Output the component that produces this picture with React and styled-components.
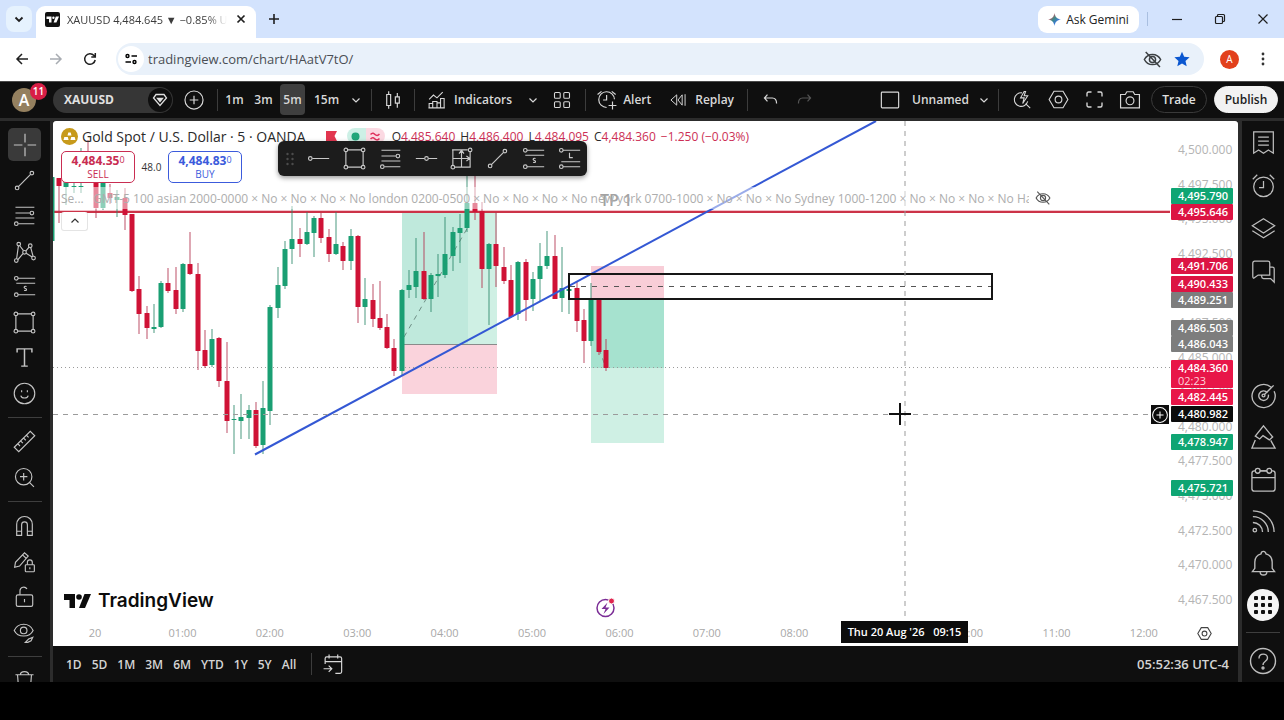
import React from "react";
import styled, { createGlobalStyle } from "styled-components";

const GlobalStyle = createGlobalStyle`
  * { box-sizing: border-box; }
  html, body { margin: 0; background: #000; }
  body, button, input { font-family: "Open Sans", "Noto Sans", sans-serif; }
  button { border: 0; padding: 0; margin: 0; background: none; color: inherit; cursor: pointer; }
`;

const Page = styled.div`
  height: 100vh;
  min-height: 560px;
  display: flex;
  flex-direction: column;
  padding-bottom: 38px;
  background: #000;
`;

/* ---------- browser chrome ---------- */
const TabStrip = styled.div`
  flex: none;
  height: 38px;
  display: flex;
  align-items: center;
  padding-left: 6px;
  background: #d3e3fd;
  color: #1f1f1f;
`;
const TabSearch = styled.button`
  width: 26px;
  height: 26px;
  border-radius: 8px;
  background: #e6f2fe;
  display: grid;
  place-items: center;
`;
const Tab = styled.div`
  align-self: flex-end;
  display: flex;
  align-items: center;
  gap: 7px;
  width: 220px;
  height: 32px;
  margin-left: 4px;
  padding: 0 8px 6px 9px;
  border-radius: 9px 9px 0 0;
  background: #fff;
`;
const TabTitle = styled.span`
  flex: 1;
  overflow: hidden;
  white-space: nowrap;
  font-size: 11px;
  color: #3c3c3c;
  mask-image: linear-gradient(90deg, #000 88%, transparent);
`;
const ChromeButton = styled.button`
  width: ${(p) => p.$w || 34}px;
  height: 30px;
  display: grid;
  place-items: center;
  color: ${(p) => p.$color || "#1f1f1f"};
`;
const Spacer = styled.div`
  flex: 1;
`;
const Gemini = styled.button`
  display: flex;
  align-items: center;
  justify-content: center;
  gap: 5px;
  width: 101px;
  height: 27px;
  border-radius: 9px;
  background: #fff;
  font-size: 12px;
  font-weight: 500;
  color: #222;
`;
const StripRule = styled.span`
  width: 1px;
  height: 14px;
  margin: 0 7px 0 8px;
  background: #a9bfe0;
`;
const AddressBar = styled.div`
  flex: none;
  height: 43px;
  display: flex;
  align-items: center;
  padding: 0 5px 1px;
  background: #fff;
`;
const Omnibox = styled.label`
  flex: 1;
  display: flex;
  align-items: center;
  height: 32px;
  margin: 0 8px 0 9px;
  padding: 0 7px 0 2px;
  border-radius: 16px;
  background: #e9f1fa;
`;
const SiteInfo = styled.span`
  width: 26px;
  height: 26px;
  border-radius: 50%;
  background: #fff;
  display: grid;
  place-items: center;
`;
const UrlInput = styled.input`
  flex: 1;
  min-width: 0;
  margin-left: 4px;
  padding: 0;
  border: 0;
  outline: 0;
  background: none;
  font-size: 13px;
  color: #4a4e54;
`;
const Profile = styled.button`
  width: 19px;
  height: 19px;
  margin: 0 8px;
  border-radius: 50%;
  background: #e2401c;
  color: #fff;
  font-size: 10px;
`;

/* ---------- app frame ---------- */
const TopBar = styled.header`
  flex: none;
  height: 40px;
  display: flex;
  align-items: center;
  padding: 0 6px 1px 0;
  background: #0f0f0f;
  border-top: 1px solid #4a4a4a;
  border-bottom: 3px solid #2c2c2c;
  color: #d8d8d8;
  font-size: 12px;
  font-weight: 600;
`;
const BarButton = styled.button`
  width: ${(p) => (p.$w ? p.$w + "px" : "auto")};
  height: 30px;
  display: flex;
  align-items: center;
  justify-content: center;
  font-size: 12px;
  font-weight: 600;
  white-space: nowrap;
  padding-right: ${(p) => p.$pad || 0}px;
  color: ${(p) => (p.$dim ? "#555" : "#d8d8d8")};
`;
const IconSlot = styled.span`
  flex: none;
  width: ${(p) => p.$w}px;
  display: grid;
  place-items: center;
`;
const BarRule = styled.span`
  flex: none;
  width: 1px;
  height: 22px;
  margin: 0 ${(p) => (p.$tight ? 2 : 5)}px;
  background: #3c3c3c;
`;
const Avatar = styled.button`
  position: relative;
  width: 24px;
  height: 24px;
  margin: 0 17px 0 12px;
  border-radius: 50%;
  background: #94805f;
  color: #fff;
  font-size: 16px;
  font-weight: 600;
  line-height: 24px;
`;
const Badge = styled.span`
  position: absolute;
  top: -5px;
  left: 18px;
  width: 17px;
  height: 17px;
  border-radius: 50%;
  background: #d81e46;
  font-size: 10px;
  line-height: 17px;
`;
const SymbolButton = styled.button`
  display: flex;
  align-items: center;
  justify-content: space-between;
  width: 120px;
  height: 26px;
  padding: 0 1px 0 11px;
  border-radius: 13px;
  background: #363636;
  font-size: 12px;
  font-weight: 700;
  color: #e0e0e0;
`;
const SymbolFlag = styled.span`
  width: 24px;
  height: 24px;
  border-radius: 50%;
  background: #0f0f0f;
  display: grid;
  place-items: center;
`;
const Interval = styled.button`
  width: ${(p) => (p.$wide ? 35 : 25)}px;
  height: 31px;
  margin: 0 2px;
  border-radius: 4px;
  font-size: 12px;
  font-weight: 600;
  background: ${(p) => (p.$active ? "#3f3f3f" : "transparent")};
`;
const Pill = styled.button`
  width: ${(p) => p.$w}px;
  height: 27px;
  margin-left: ${(p) => (p.$solid ? 7 : 3)}px;
  border-radius: 14px;
  border: 1px solid ${(p) => (p.$solid ? "#f2f2f2" : "#3a3a3a")};
  background: ${(p) => (p.$solid ? "#f2f2f2" : "transparent")};
  color: ${(p) => (p.$solid ? "#1c1c1c" : "#e0e0e0")};
  font-size: 12px;
  font-weight: 600;
`;
const Body = styled.main`
  flex: 1;
  min-height: 0;
  display: flex;
  background: #0f0f0f;
`;
const LeftRail = styled.nav`
  flex: none;
  width: 53px;
  padding: 6px 1px 0 0;
  overflow: hidden;
  border-right: 3px solid #2c2c2c;
  color: #c4c4c4;
`;
const ToolGroup = styled.div`
  display: grid;
  grid-auto-rows: 1fr;
  justify-items: center;
  align-items: center;
  height: ${(p) => p.$h}px;
`;
const Tool = styled.button`
  width: 33px;
  height: 33px;
  border-radius: 5px;
  display: grid;
  place-items: center;
  background: ${(p) => (p.$active ? "#3a3a3a" : "transparent")};
`;
const RailRule = styled.div`
  width: 34px;
  height: 1px;
  margin: 6px auto;
  background: #3e3e3e;
`;
const RightRail = styled.nav`
  flex: none;
  display: flex;
  flex-direction: column;
  width: 46px;
  border-left: 4px solid #2c2c2c;
  color: #bdbdbd;
`;
const RailButton = styled.button`
  width: 42px;
  height: ${(p) => p.$h || 42}px;
  display: grid;
  place-items: center;
`;
const AppsDot = styled.span`
  width: 32px;
  height: 32px;
  border-radius: 50%;
  background: #f5f5f5;
  color: #111;
  display: grid;
  place-items: center;
`;
const Center = styled.section`
  flex: 1;
  min-width: 0;
  display: flex;
  flex-direction: column;
`;
const Chart = styled.div`
  flex: 1;
  min-height: 0;
  display: grid;
  grid-template-columns: 1fr 68px;
  grid-template-rows: 1fr 26px;
  position: relative;
  overflow: hidden;
  background: #fff;
  border-radius: 3px 3px 0 0;
`;
const Plot = styled.div`
  position: relative;
  overflow: hidden;
`;
const PlotSvg = styled.svg`
  position: absolute;
  inset: 0;
  width: 100%;
  height: 100%;
`;
const PriceScale = styled.div`
  position: relative;
  overflow: hidden;
`;
const PriceText = styled.span`
  position: absolute;
  left: 8px;
  top: ${(p) => p.$y - 8}px;
  font-size: 12px;
  line-height: 16px;
  color: #b4b4b4;
`;
const PriceTag = styled.span`
  position: absolute;
  left: 1px;
  top: ${(p) => p.$y - 8}px;
  width: 62px;
  padding-left: 7px;
  border-radius: 1px;
  background: ${(p) => p.$bg};
  color: #fff;
  font-size: 11px;
  font-weight: 600;
  line-height: 16px;
`;
const Countdown = styled.small`
  display: block;
  margin-top: -2px;
  font-size: 11px;
  font-weight: 400;
  line-height: 14px;
  color: #ffd5dd;
`;
const TimeScale = styled.div`
  display: flex;
  justify-content: space-between;
  align-items: center;
  padding: 0 6px 2px 22px;
  font-size: 11px;
  color: #a8a8a8;
`;
const TimeText = styled.span`
  width: 40px;
  text-align: center;
`;
const ScaleSettings = styled.button`
  display: grid;
  place-items: center;
  color: #444;
`;
const CrossTime = styled.span`
  position: absolute;
  left: 788px;
  bottom: 3px;
  width: 127px;
  height: 22px;
  background: #0c0c0c;
  color: #fff;
  text-align: center;
  white-space: pre;
  font-size: 11px;
  font-weight: 600;
  line-height: 22px;
`;
const CrossAdd = styled.button`
  position: absolute;
  right: 1px;
  top: 284px;
  width: 18px;
  height: 19px;
  background: #0c0c0c;
  color: #fff;
  display: grid;
  place-items: center;
`;
const Legend = styled.div`
  position: absolute;
  inset: 0 auto auto 0;
  padding-left: 8px;
`;
const TitleRow = styled.div`
  display: flex;
  align-items: center;
  height: 30px;
  white-space: nowrap;
  color: #2a2a2a;
`;
const Title = styled.h1`
  margin: 0 19px 0 4px;
  font-size: 14px;
  font-weight: 400;
`;
const Status = styled.span`
  display: flex;
  justify-content: space-around;
  align-items: center;
  width: 38px;
  height: 16px;
  margin: 0 7px 0 10px;
  border-radius: 8px;
  background: linear-gradient(90deg, #cdf0e6 50%, #fbd9e2 50%);
`;
const Ohlc = styled.span`
  font-size: 12px;
  margin-right: 5px;
  b { font-weight: 400; color: #cc2f55; }
`;
const TradeRow = styled.div`
  display: flex;
  align-items: center;
  gap: 7px;
  height: 32px;
`;
const TradeButton = styled.button`
  width: 74px;
  height: 32px;
  border: 1px solid ${(p) => p.$c};
  border-radius: 5px;
  background: #fff;
  color: ${(p) => p.$c};
  font-size: 10px;
  line-height: 12px;
  b { display: block; font-size: 12px; line-height: 14px; }
  sup { font-size: 9px; font-weight: 400; vertical-align: 2px; line-height: 0; }
`;
const Spread = styled.span`
  width: 19px;
  font-size: 10px;
  color: #333;
  display: flex;
  justify-content: center;
`;
const StudyRow = styled.div`
  display: flex;
  align-items: center;
  gap: 6px;
  height: 22px;
  margin: 4px 0 3px;
  background: rgba(255, 255, 255, 0.5);
  color: #555;
`;
const StudyText = styled.span`
  width: 968px;
  overflow: hidden;
  white-space: pre;
  font-size: 12px;
  color: #adadad;
`;
const Collapse = styled.button`
  width: 27px;
  height: 19px;
  border: 1px solid #e4e4e4;
  border-top: 0;
  border-radius: 3px;
  background: #fff;
  color: #333;
  display: grid;
  place-items: center;
`;
const FloatingBar = styled.div`
  position: absolute;
  left: 225px;
  top: 20px;
  display: grid;
  grid-template-columns: 23px repeat(8, 1fr);
  width: 309px;
  height: 35px;
  border-radius: 6px;
  background: #1c1c1c;
  box-shadow: 0 2px 5px rgba(0, 0, 0, 0.4);
  color: #c8c8c8;
`;
const FloatButton = styled.button`
  display: grid;
  place-items: center;
`;
const Brand = styled.a`
  position: absolute;
  left: 11px;
  bottom: 7px;
  display: flex;
  align-items: center;
  gap: 7px;
  color: #0c0c0c;
  font-family: Inter, sans-serif;
  font-size: 19px;
  font-weight: 600;
  line-height: 24px;
  text-decoration: none;
`;
const BottomBar = styled.footer`
  flex: none;
  height: 36px;
  display: flex;
  align-items: center;
  padding: 0 9px 0 13px;
  background: #0f0f0f;
  color: #d4d4d4;
  font-size: 12px;
  font-weight: 600;
`;
const Range = styled.button`
  margin-right: 10px;
  font-size: 12px;
  font-weight: 600;
`;
const Clock = styled.span`
  font-size: 13px;
`;

/* ---------- icons ---------- */
const Ico = ({ s = 22, v = 28, sw = 1.5, children, ...r }) => (
  <svg width={s} height={s} viewBox={`0 0 ${v} ${v}`} fill="none" stroke="currentColor" strokeWidth={sw} aria-hidden="true" {...r}>
    {children}
  </svg>
);
const Chevron = ({ up }) => (
  <Ico s={10} v={10} sw={1.2}><path d={up ? "M1.5 6.5 5 3l3.5 3.5" : "M1.5 3.5 5 7l3.5-3.5"} /></Ico>
);
const Dot = ({ x, y }) => <circle cx={x} cy={y} r="2.2" />;
const icons = {
  cross: <path d="M14 1v10M14 17v10M1 14h10M17 14h10" />,
  trend: <><Dot x={5} y={23} /><Dot x={23} y={5} /><path d="M6.6 21.4 21.4 6.6" /></>,
  fib: <><path d="M3 4h23M3 11h17.500M3 17h23M6.500 24H26" /><Dot x={23} y={11} /><Dot x={4} y={24} /></>,
  pattern: <><Dot x={4} y={25} /><Dot x={7} y={5} /><Dot x={14} y={15} /><Dot x={21} y={7} /><Dot x={25} y={22} /><path d="M4.4 22.8 6.6 7.2M8.2 7 12.8 13M15.5 13.4 19.5 8.6M21.6 9.2l2.8 10.6M6 23.8 12.2 16.5M16 16l7.2 4.6" /></>,
  position: <><path d="M6 4h21M4 10h23M6 24h21" /><Dot x={4} y={4} /><Dot x={4} y={24} /><path d="M16.5 14c-3-1-4 1.6-1.5 2.4s1.600 3.200-1.500 2.200" /></>,
  long: <><path d="M6 4h21M4 18h23M6 24h21M14 7v6h4" /><Dot x={4} y={4} /><Dot x={4} y={24} /></>,
  rect: <><path d="M6 3.500h16M6 24.500h16M3.500 6v16M24.500 6v16" /><Dot x={3.500} y={3.500} /><Dot x={24.500} y={3.500} /><Dot x={3.500} y={24.500} /><Dot x={24.500} y={24.500} /></>,
  text: <path d="M5 8V3.500h18V8M14 3.500v21M10 24.500h8" strokeWidth="1.8" />,
  smile: <><circle cx="14" cy="14" r="12.500" /><path d="M9.500 16.500c1 4 8 4 9 0M10.500 10v2.500M17.500 10v2.500" /></>,
  ruler: <path d="M1.500 21 21 1.500 26.500 7 7 26.500zM6 17l2.500 2.500M9.500 13.500 12 16M13 10l2.500 2.500M16.500 6.500 19 9" />,
  zoom: <><circle cx="13" cy="13" r="10" /><path d="M13 8.500v9M8.500 13h9M20 20l5.500 5.500" /></>,
  magnet: <><path d="M4.500 26V12.500a9.500 9.500 0 0 1 19 0V26h-6V13a3.500 3.500 0 0 0-7 0v13zM4.500 21h6M17.500 21h6" /></>,
  pencilLock: <><path d="m2 21 1-6L14 3.500l4.500 4L8 19.500zM11.500 6l4.500 4" /><rect x="15" y="18" width="11" height="8.500" rx="1" /><path d="M17.500 18v-3a3 3 0 0 1 6 0v3M20.500 21v2.500" /></>,
  lock: <><rect x="4" y="12" width="20" height="14" rx="2" /><path d="M8.500 12V7a4.500 4.500 0 0 1 8.500-2M14 17v4" /></>,
  eye: <><path d="M1.500 11.500C6 1.500 20 1.500 24.500 11.500 20 20.500 6 20.500 1.500 11.500z" /><circle cx="13" cy="11.500" r="4" /><path d="m15 26 4-4 5-2-2 4-4 2z" /></>,
  trash: <path d="M3 7h22M9 7c0-5 10-5 10 0M5.500 7 7 26h14l1.500-19" />,
  plusCircle: <><circle cx="14" cy="14" r="11.500" /><path d="M14 8.500v11M8.500 14h11" /></>,
  candles: <path d="M6 7h5v14H6zM8.500 3v4M8.500 21v4M17 10h5v8h-5zM19.500 5v5M19.500 18v6" />,
  indicators: <path d="M3 13l6-6 5 4 8-8M3 25v-6h5v6zM8 25v-9h6v9zM14 25v-7h5v7M19 25V12h5v13zM2 25h23" />,
  grid: <><rect x="3.500" y="3.500" width="8" height="8" rx="1.500" /><rect x="16.500" y="3.500" width="8" height="8" rx="1.500" /><rect x="3.500" y="16.500" width="8" height="8" rx="1.500" /><rect x="16.500" y="16.500" width="8" height="8" rx="1.500" /></>,
  alert: <path d="M23.500 13A10 10 0 1 0 13.500 23.500M13.500 7.500V14H9M2 7l5-4M25 7l-5-4M21 16v10M16 21h10" />,
  replay: <path d="M12 6v16L3 14zM20.500 6v16L14 14zM25 5v18" />,
  undo: <path d="M9 6 4 11.500 9 17M4 11.500h13c5 0 7 3.500 7 9" />,
  redo: <path d="m19 6 5 5.500-5 5.500M24 11.500H11c-5 0-7 3.500-7 9" />,
  square: <rect x="3" y="4" width="22" height="20" rx="1" />,
  quick: <><path d="M14 4A9.500 9.500 0 1 0 22 16M19 19l6.500 6.500M17 2l-5 9h5l-2 8 7-11h-5l2-6z" /></>,
  hex: <><path d="M8 3h12l6.500 11L20 25H8L1.500 14z" /><circle cx="14" cy="14" r="4.500" /></>,
  full: <path d="M4 10V6a2 2 0 0 1 2-2h4M18 4h4a2 2 0 0 1 2 2v4M24 18v4a2 2 0 0 1-2 2h-4M10 24H6a2 2 0 0 1-2-2v-4" strokeWidth="1.800" />,
  camera: <><path d="M2 7h6l2-3.500h8L20 7h6v17H2z" /><circle cx="14" cy="15" r="5" /></>,
  bookmark: <path d="M3 2h22v24l-5.500-3.500L14 26l-5.500-3.500L3 26zM8 8h12M8 12.500h12M8 17h12" />,
  clock: <><circle cx="14" cy="15.500" r="11" /><path d="M14 9v7.500H9M2 7l5-5M26 7l-5-5" /></>,
  layers: <path d="m14 3 12.500 8L14 19 1.500 11zM1.500 16.500 14 24.500l12.500-8" />,
  chat: <path d="M2 4.500a2 2 0 0 1 2-2h15a2 2 0 0 1 2 2V18H8l-5 3.500q-1-.5-1-2zM21 9h3a2 2 0 0 1 2 2v15l-4-4h-8a2 2 0 0 1-2-2v-2" />,
  radar: <><path d="M22 5.500A12 12 0 1 0 25 9.500M18 11a5 5 0 1 0 1 2" /><circle cx="14" cy="14" r="1.500" /><path d="M15 13 24.500 3.500" /></>,
  peaks: <path d="m14 2 9.500 11.500L20 16.500l-6.500-4.500-3.500 3.500-4.500-3zM5.500 16.500 2 25h24l-4.500-8" />,
  calendar: <><rect x="2" y="5" width="24" height="21" rx="2.500" /><path d="M2 12h24M10 5h8" /><circle cx="8" cy="5" r="2.500" fill="#0f0f0f" /><circle cx="20" cy="5" r="2.500" fill="#0f0f0f" /></>,
  feed: <><circle cx="5" cy="23" r="1.800" /><path d="M3 15a10 10 0 0 1 10 10M3 9a16 16 0 0 1 16 16M3 3a22 22 0 0 1 22 22" /></>,
  bell: <path d="M2.500 22.500h23L23 19v-6.500c0-5-3-7.500-6.500-8.500a2.500 2.500 0 0 0-5 0C8 5 5 7.500 5 12.500V19zM10.500 22.500c0 4.500 7 4.500 7 0" />,
  help: <><circle cx="14" cy="14" r="12.500" /><path d="M10 11.500c0-6 8.500-5.500 8.500-.5 0 3.500-4.500 3-4.500 7" /><circle cx="14" cy="21" r="1" /></>,
  goto: <path d="M4 14V7a2 2 0 0 1 2-2h17a2 2 0 0 1 2 2v17a2 2 0 0 1-2 2h-6M4 11h21M9 2v5M20 2v5M2 20h10M8.500 16l4 4-4 4" />,
  ray: <><Dot x={4} y={14} /><path d="M6.500 14H27" /></>,
  hline: <><Dot x={14} y={14} /><path d="M1 14h10.500M16.500 14H27" /></>,
  range: <><path d="M2.500 3.500h19M3.500 3.500v18.500M6 24.500h18.500V6M14 4v20M4 14h20M11 8l3-4 3 4M20 11l4 3-4 3" /><Dot x={24.500} y={3.500} /><Dot x={3.500} y={24.500} /></>,
  eyeOff: <><path d="M2 14C7 4 21 4 26 14 21 24 7 24 2 14z" /><circle cx="14" cy="14" r="4.500" /><path d="M4 3l21 22" /></>,
};
const I = ({ n, ...r }) => <Ico {...r}>{icons[n]}</Ico>;

const TvMark = ({ w, fill }) => (
  <svg width={w} height={Math.round(w * 0.52)} viewBox="0 0 27 14" fill={fill} aria-hidden="true">
    <path d="M0 0h11v14H5.500V6H0z" /><circle cx="15" cy="3" r="2.800" /><path d="M20.500 0H27l-6 14h-6z" />
  </svg>
);

/* ---------- chart data: [bar, body top, body bottom, wick top, wick bottom, up] ---------- */
const bars = [
  [-6, 177, 241, 177, 241, 1], [-5, 178, 186, 178, 223, 0], [-4, 182, 187, 182, 205, 1], [-3, 186, 187, 182, 193, 1],
  [-2, 186, 187, 148, 193, 1], [-1, 152, 160, 140, 180, 0], [0, 182, 208, 176, 218, 0], [1, 183, 208, 176, 210, 1],
  [2, 193, 198, 184, 204, 0], [3, 197, 200, 190, 217, 1], [4, 198, 215, 188, 230, 0], [5, 214, 291, 214, 292, 0],
  [6, 289, 314, 276, 334, 0], [7, 313, 328, 306, 339, 0], [8, 327, 329, 304, 333, 1], [9, 283, 327, 281, 328, 1],
  [10, 283, 291, 268, 293, 0], [11, 290, 309, 267, 314, 0], [12, 264, 309, 263, 312, 1], [13, 264, 274, 232, 275, 0],
  [14, 274, 351, 263, 370, 0], [15, 350, 366, 330, 368, 0], [16, 339, 365, 329, 367, 1], [17, 338, 381, 337, 387, 0],
  [18, 381, 421, 342, 433, 0], [19, 419, 420, 405, 454, 1], [20, 417, 421, 394, 439, 1], [21, 410, 418, 405, 439, 1],
  [22, 410, 446, 402, 448, 0], [23, 408, 445, 381, 454, 1], [24, 307, 411, 305, 425, 1], [25, 285, 308, 267, 318, 1],
  [26, 249, 286, 241, 289, 1], [27, 239, 249, 206, 264, 1], [28, 239, 244, 228, 257, 0], [29, 232, 244, 212, 245, 1],
  [30, 218, 233, 216, 257, 1], [31, 218, 238, 213, 243, 0], [32, 237, 254, 229, 262, 0], [33, 244, 254, 212, 255, 1],
  [34, 246, 261, 242, 270, 0], [35, 236, 261, 229, 270, 1], [36, 236, 307, 235, 323, 0], [37, 299, 307, 278, 325, 1],
  [38, 300, 319, 284, 327, 0], [39, 318, 328, 281, 330, 0], [40, 327, 348, 314, 349, 0], [41, 348, 371, 339, 376, 0],
  [42, 290, 371, 289, 375, 1], [43, 285, 290, 270, 298, 1], [44, 271, 287, 238, 298, 1], [45, 271, 299, 232, 300, 0],
  [46, 275, 299, 273, 312, 1], [47, 274, 276, 254, 297, 1], [48, 254, 275, 217, 278, 1], [49, 232, 256, 227, 271, 1],
  [50, 228, 233, 214, 263, 1], [51, 203, 228, 176, 232, 1], [52, 203, 212, 176, 220, 0], [53, 211, 269, 202, 288, 0],
  [54, 244, 269, 243, 325, 1], [55, 244, 266, 212, 287, 0], [56, 267, 281, 247, 284, 0], [57, 280, 317, 265, 318, 0],
  [58, 262, 314, 261, 320, 1], [59, 262, 300, 259, 321, 0], [60, 279, 299, 272, 311, 1], [61, 266, 279, 243, 301, 1],
  [62, 256, 266, 231, 269, 1], [63, 256, 299, 235, 299, 0], [64, 288, 298, 247, 312, 1], [65, 289, 291, 285, 314, 1],
  [66, 288, 321, 281, 332, 0], [67, 320, 341, 309, 363, 0], [68, 298, 341, 283, 346, 1], [69, 299, 352, 299, 355, 0],
  [70, 350, 368, 339, 371, 0],
];
const tags = [
  [196, "4,495.790", "#0fa573"], [212, "4,495.646", "#dc1443"], [266, "4,491.706", "#dc1443"], [284, "4,490.433", "#dc1443"],
  [300, "4,489.251", "#7d7d7d"], [328, "4,486.503", "#7d7d7d"], [344, "4,486.043", "#7d7d7d"],
  [368, "4,484.360", "#e81648", "02:23"], [397, "4,482.445", "#e81648"], [414, "4,480.982", "#0c0c0c"],
  [442, "4,478.947", "#0fa573"], [488, "4,475.721", "#0fa573"],
];
const priceLabels = Array.from({ length: 14 }, (_, i) => ({
  text: (4500 - i * 2.5).toFixed(3).replace(/^4/, "4,"),
  y: Math.round(29 + i * 34.6),
}));
const times = ["20", "01:00", "02:00", "03:00", "04:00", "05:00", "06:00", "07:00", "08:00", "09:00", "10:00", "11:00", "12:00"];
const study =
  "Se...   GMT-5 100 asian 2000-0000 × No × No × No × No london 0200-0500 × No × No × No × No new york 0700-1000 × No × No × No Sydney 1000-1200 × No × No × No × No Harmonic";

function ChartDrawing() {
  return (
    <PlotSvg role="img" aria-label="Gold Spot candlestick chart">
      <g transform="translate(-53 -121)">
        <rect x="402" y="211" width="95" height="133" fill="#cff0e4" />
        <rect x="402" y="211" width="66" height="133" fill="#bfe9dc" />
        <rect x="402" y="344" width="95" height="50" fill="#fad3dc" />
        <path d="M402 344.500h95" stroke="#8a8a8a" />
        <rect x="591" y="266" width="73" height="33" fill="#f8cdd7" />
        <rect x="591" y="299" width="73" height="69" fill="#a6e2cf" />
        <rect x="591" y="368" width="73" height="75" fill="#cff0e4" />
        <path d="M53 367.500h1117" stroke="#9a9a9a" strokeDasharray="1 3" />
        <path d="M404 337 468 227M599 349l7 19" stroke="#6f8f86" strokeDasharray="5 5" fill="none" />
        <path d="M53 210.500h1117" stroke="#f3c3cb" />
        <path d="M53 212h1117" stroke="#cc3348" strokeWidth="2" />
        {bars.map(([n, t, b, h, l, up]) => {
          const x = Math.round(95.5 + n * 7.29);
          return (
            <g key={n} fill={up ? "#1a9f73" : "#cf1236"}>
              <rect x={x - 0.5} y={h} width="1" height={l - h} fill={up ? "#2c8a6b" : "#b3314d"} opacity="0.85" />
              <rect x={x - 2.5} y={t} width="5" height={b - t} rx="0.500" />
            </g>
          );
        })}
        <path d="M255 454.500 876 121" stroke="#3458d4" strokeWidth="2" />
        <rect x="569" y="274" width="423" height="25" fill="none" stroke="#161616" strokeWidth="2" />
        <path d="M570 286.500h421" stroke="#555" strokeDasharray="5 6" />
        <text x="600" y="206" fontSize="16" fontWeight="600" fill="#444" fontFamily="Open Sans, sans-serif">TP 1</text>
        <path d="M905 121v500" stroke="#9b9b9b" strokeDasharray="5 5" />
        <path d="M53 414.500h1117" stroke="#9b9b9b" strokeDasharray="5 5" />
        <path d="M900 403v22M889 414h22" stroke="#111" strokeWidth="2" />
        <circle cx="605.500" cy="608" r="8.500" fill="#fff" stroke="#7b2d96" strokeWidth="1.500" />
        <path d="m607.500 602.500-6 6.500h4l-2 5 6-6.500h-4z" fill="#7b2d96" />
        <circle cx="611.500" cy="601" r="3" fill="#e0264f" stroke="#fff" />
      </g>
    </PlotSvg>
  );
}

const Browser = () => (
  <>
    <TabStrip>
      <TabSearch aria-label="Search tabs"><Ico s={12} v={12} sw={1.800}><path d="m2.500 4.500 3.500 3.500 3.500-3.500" /></Ico></TabSearch>
      <Tab>
        <svg width="15" height="15" viewBox="0 0 15 15" aria-hidden="true">
          <rect width="15" height="15" rx="2" fill="#111" />
          <g fill="#fff"><path d="M1.500 4.500h5v6H4V7H1.500z" /><circle cx="8.400" cy="5.800" r="1.200" /><path d="M10.800 4.500H14l-2.600 6H8.600z" /></g>
        </svg>
        <TabTitle>XAUUSD 4,484.645 ▼ −0.85% Unnamed</TabTitle>
        <button aria-label="Close tab"><Ico s={14} v={14} sw={1.700} display="block"><path d="m3.500 3.500 7 7M10.500 3.500l-7 7" /></Ico></button>
      </Tab>
      <ChromeButton $w={36} aria-label="New tab"><Ico s={14} v={14} sw={1.600}><path d="M7 2v10M2 7h10" /></Ico></ChromeButton>
      <Spacer />
      <Gemini>
        <svg width="13" height="13" viewBox="0 0 14 14" aria-hidden="true">
          <defs><linearGradient id="gem" x1="0" x2="1" y1="0" y2="1"><stop offset="0.200" stopColor="#e2475c" /><stop offset=".450" stopColor="#3f8a86" /><stop offset=".7" stopColor="#3b78e0" /><stop offset="1" stopColor="#4b8df0" /></linearGradient></defs>
          <path d="M7 0c.7 4.300 2.700 6.300 7 7-4.300.7-6.300 2.700-7 7-.7-4.300-2.700-6.300-7-7 4.300-.7 6.300-2.700 7-7z" fill="url(#gem)" />
        </svg>
        Ask Gemini
      </Gemini>
      <StripRule />
      <ChromeButton $w={43} aria-label="Minimize"><Ico s={12} v={12} sw={1.200}><path d="M1 6.500h10" /></Ico></ChromeButton>
      <ChromeButton $w={43} aria-label="Restore"><Ico s={12} v={12} sw={1.200}><rect x="1.500" y="3.500" width="7" height="7" rx="1" /><path d="M3.500 3.500v-1a1 1 0 0 1 1-1h5a1 1 0 0 1 1 1v5a1 1 0 0 1-1 1h-1" /></Ico></ChromeButton>
      <ChromeButton $w={43} aria-label="Close"><Ico s={12} v={12} sw={1.200}><path d="m1.500 1.500 9 9M10.500 1.500l-9 9" /></Ico></ChromeButton>
    </TabStrip>
    <AddressBar>
      <ChromeButton aria-label="Back"><Ico s={16} v={16}><path d="M14 8H3M8 3 3 8l5 5" /></Ico></ChromeButton>
      <ChromeButton $color="#a8acb2" aria-label="Forward"><Ico s={16} v={16}><path d="M2 8h11M8 3l5 5-5 5" /></Ico></ChromeButton>
      <ChromeButton aria-label="Reload"><Ico s={16} v={16}><path d="M13.200 9A5.300 5.300 0 1 1 12 4.500l1 1M13.300 2v4h-4" /></Ico></ChromeButton>
      <Omnibox>
        <SiteInfo><Ico s={14} v={14} sw={1.400}><circle cx="3.500" cy="4" r="1.500" /><path d="M7.500 4H13M1.500 10H7" /><circle cx="10.500" cy="10" r="1.500" /></Ico></SiteInfo>
        <UrlInput aria-label="Address" defaultValue="tradingview.com/chart/HAatV7tO/" />
        <ChromeButton $w={30} as="span" $color="#3c4043"><I n="eyeOff" s={19} sw={2.200} /></ChromeButton>
        <ChromeButton $w={30} as="span"><svg width="16" height="16" viewBox="0 0 16 16" fill="#0b57d0" aria-hidden="true"><path d="m8 .8 2.200 5 5.400.5-4.100 3.600 1.200 5.300L8 12.400l-4.700 2.800 1.200-5.300L.4 6.300l5.400-.5z" /></svg></ChromeButton>
      </Omnibox>
      <Profile>A</Profile>
      <ChromeButton $w={32} aria-label="Menu"><svg width="4" height="14" fill="#333" aria-hidden="true"><circle cx="2" cy="2" r="1.400" /><circle cx="2" cy="7" r="1.400" /><circle cx="2" cy="12" r="1.400" /></svg></ChromeButton>
    </AddressBar>
  </>
);

const Header = () => (
  <TopBar>
    <Avatar>A<Badge>11</Badge></Avatar>
    <SymbolButton>XAUUSD
      <SymbolFlag><Ico s={16} v={16} sw={1.300}><path d="M4 2.500h8L14.500 6 8 13.500 1.500 6z" /><path d="M5.500 6.500h5L8 9.500z" fill="currentColor" /></Ico></SymbolFlag>
    </SymbolButton>
    <BarButton $w={42} aria-label="Compare"><I n="plusCircle" /></BarButton>
    <BarRule $tight />
    <Interval>1m</Interval><Interval>3m</Interval><Interval $active>5m</Interval><Interval $wide>15m</Interval>
    <BarButton $w={20} aria-label="More intervals"><Chevron /></BarButton>
    <BarRule />
    <BarButton $w={32} aria-label="Chart style"><I n="candles" /></BarButton>
    <BarRule />
    <BarButton $pad={10}><IconSlot $w={34}><I n="indicators" s={20} /></IconSlot>Indicators</BarButton>
    <BarButton $w={22} aria-label="Templates"><Chevron /></BarButton>
    <BarButton $w={36} aria-label="Layouts"><I n="grid" s={20} /></BarButton>
    <BarRule />
    <BarButton $pad={10}><IconSlot $w={32}><I n="alert" /></IconSlot>Alert</BarButton>
    <BarButton $pad={8}><IconSlot $w={34}><I n="replay" s={18} /></IconSlot>Replay</BarButton>
    <BarRule />
    <BarButton $w={34} aria-label="Undo"><I n="undo" s={17} sw={2} /></BarButton>
    <BarButton $w={34} $dim aria-label="Redo"><I n="redo" s={17} sw={2} /></BarButton>
    <Spacer />
    <BarButton $pad={6}><IconSlot $w={44}><I n="square" s={22} /></IconSlot>Unnamed</BarButton>
    <BarButton $w={18} aria-label="Manage layouts"><Chevron /></BarButton>
    <BarRule />
    <BarButton $w={36} aria-label="Quick search"><I n="quick" s={20} /></BarButton>
    <BarButton $w={36} aria-label="Settings"><I n="hex" s={21} /></BarButton>
    <BarButton $w={36} aria-label="Fullscreen"><I n="full" s={21} /></BarButton>
    <BarButton $w={36} aria-label="Snapshot"><I n="camera" s={22} /></BarButton>
    <Pill $w={56}>Trade</Pill>
    <Pill $w={64} $solid>Publish</Pill>
  </TopBar>
);

const Tools = ({ names, h }) => (
  <ToolGroup $h={h}>
    {names.map((n) => <Tool key={n} $active={n === "cross"} aria-label={n}><I n={n} s={n === "cross" ? 24 : 23} sw={1.400} /></Tool>)}
  </ToolGroup>
);

export default function App() {
  return (
    <Page>
      <GlobalStyle />
      <Browser />
      <Header />
      <Body>
        <LeftRail>
          <Tools h={284} names={["cross", "trend", "fib", "pattern", "position", "rect", "text", "smile"]} />
          <RailRule />
          <Tools h={71} names={["ruler", "zoom"]} />
          <RailRule />
          <Tools h={142} names={["magnet", "pencilLock", "lock", "eye"]} />
          <RailRule />
          <Tools h={35} names={["trash"]} />
        </LeftRail>
        <Center>
          <Chart>
            <Plot>
              <ChartDrawing />
              <Legend>
                <TitleRow>
                  <svg width="17" height="17" viewBox="0 0 17 17" aria-hidden="true"><circle cx="8.500" cy="8.500" r="8.500" fill="#c79a1b" /><path d="m6.500 7.500.8-3h2.400l.8 3zM2.500 12l.8-3h3.500l.8 3zM9.400 12l.8-3h3.500l.8 3z" fill="#fff" /></svg>
                  <Title>Gold Spot / U.S. Dollar · 5 · OANDA</Title>
                  <svg width="12" height="13" viewBox="0 0 12 13" aria-hidden="true"><path d="M1 1h11L9.500 6l2.500 5H1z" fill="#e2364f" /></svg>
                  <Status>
                    <svg width="9" height="9" aria-hidden="true"><circle cx="4.500" cy="4.500" r="4" fill="#21a67a" /></svg>
                    <Ico s={10} v={10} sw={1.500} color="#e0315d"><path d="M.5 3.500c2-2.500 3.500-1 4.500 0s3 1.500 4.500-.5M.5 8c2-2.500 3.500-1 4.500 0s3 1.500 4.500-.5" /></Ico>
                  </Status>
                  <Ohlc>O<b>4,485.640</b></Ohlc><Ohlc>H<b>4,486.400</b></Ohlc><Ohlc>L<b>4,484.095</b></Ohlc><Ohlc>C<b>4,484.360</b></Ohlc>
                  <Ohlc><b>−1.250 (−0.03%)</b></Ohlc>
                </TitleRow>
                <TradeRow>
                  <TradeButton $c="#c92d52"><b>4,484.35<sup>0</sup></b>SELL</TradeButton>
                  <Spread>48.0</Spread>
                  <TradeButton $c="#3c5bdc"><b>4,484.83<sup>0</sup></b>BUY</TradeButton>
                </TradeRow>
                <StudyRow><StudyText>{study}</StudyText><I n="eyeOff" s={16} sw={2} /></StudyRow>
                <Collapse aria-label="Collapse legend"><Chevron up /></Collapse>
              </Legend>
              <FloatingBar>
                <FloatButton aria-label="Move toolbar">
                  <svg width="8" height="14" fill="#4c4c4c" aria-hidden="true">{[2, 7, 12].map((y) => <g key={y}><circle cx="1.500" cy={y} r="1.200" /><circle cx="6.500" cy={y} r="1.200" /></g>)}</svg>
                </FloatButton>
                {["ray", "rect", "fib", "hline", "range", "trend", "position", "long"].map((n) => (
                  <FloatButton key={n} aria-label={n}><I n={n} s={23} sw={1.400} /></FloatButton>
                ))}
              </FloatingBar>
              <CrossAdd aria-label="Add at price"><I n="plusCircle" s={18} sw={1.600} /></CrossAdd>
              <Brand href="#"><TvMark w={27} fill="#0c0c0c" />TradingView</Brand>
            </Plot>
            <PriceScale>
              {priceLabels.map((p) => <PriceText key={p.text} $y={p.y}>{p.text}</PriceText>)}
              {tags.map(([y, text, bg, left]) => (
                <PriceTag key={text} $y={y - 121} $bg={bg}>{text}{left && <Countdown>{left}</Countdown>}</PriceTag>
              ))}
            </PriceScale>
            <TimeScale>{times.map((t) => <TimeText key={t}>{t}</TimeText>)}</TimeScale>
            <ScaleSettings aria-label="Scale settings"><I n="hex" s={15} sw={2} /></ScaleSettings>
            <CrossTime>{"Thu 20 Aug '26   09:15"}</CrossTime>
          </Chart>
          <BottomBar>
            {["1D", "5D", "1M", "3M", "6M", "YTD", "1Y", "5Y", "All"].map((r) => <Range key={r}>{r}</Range>)}
            <BarRule />
            <BarButton $w={32} aria-label="Go to date"><I n="goto" s={22} /></BarButton>
            <Spacer />
            <Clock>05:52:36 UTC-4</Clock>
          </BottomBar>
        </Center>
        <RightRail>
          {["bookmark", "clock", "layers", "chat"].map((n) => <RailButton key={n} $h={43} aria-label={n}><I n={n} s={25} sw={1.400} /></RailButton>)}
          <Spacer />
          {["radar", "peaks", "calendar", "feed", "bell"].map((n) => <RailButton key={n} aria-label={n}><I n={n} s={27} sw={1.400} /></RailButton>)}
          <RailButton aria-label="Apps">
            <AppsDot><svg width="18" height="18" fill="currentColor" aria-hidden="true">{[0, 7, 14].map((y) => [0, 7, 14].map((x) => <rect key={x + "-" + y} x={x} y={y} width="4" height="4" rx="1" />))}</svg></AppsDot>
          </RailButton>
          <RailRule />
          <RailButton $h={43} aria-label="Help"><I n="help" s={28} sw={1.400} /></RailButton>
        </RightRail>
      </Body>
    </Page>
  );
}
